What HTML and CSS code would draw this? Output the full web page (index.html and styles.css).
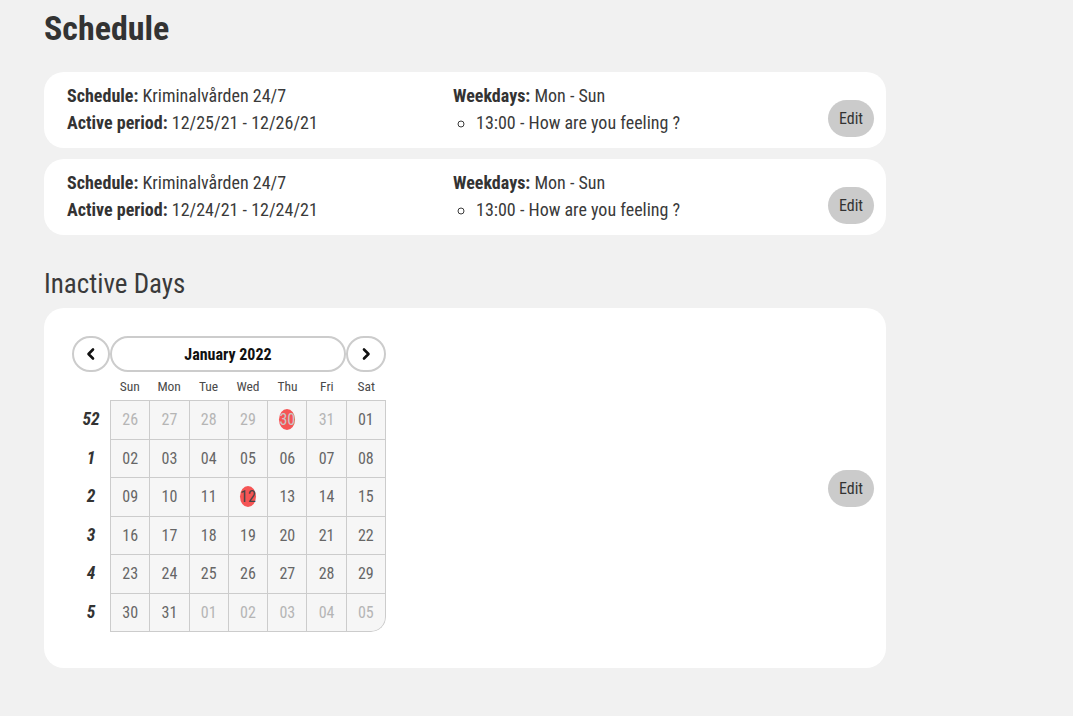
FILE: index.html
```html
<!DOCTYPE html>
<html lang="en">
<head>
<meta charset="utf-8">
<title>Schedule</title>
<link rel="stylesheet" href="styles.css">
</head>
<body>
<main class="page">
  <h1 class="title">Schedule</h1>

  <section class="card schedule-card">
    <div class="col">
      <div class="line"><b>Schedule:</b> Kriminalvården 24/7</div>
      <div class="line"><b>Active period:</b> 12/25/21 - 12/26/21</div>
    </div>
    <div class="col">
      <div class="line"><b>Weekdays:</b> Mon - Sun</div>
      <ul class="msgs"><li>13:00 - How are you feeling ?</li></ul>
    </div>
    <button class="edit edit-low">Edit</button>
  </section>

  <section class="card schedule-card">
    <div class="col">
      <div class="line"><b>Schedule:</b> Kriminalvården 24/7</div>
      <div class="line"><b>Active period:</b> 12/24/21 - 12/24/21</div>
    </div>
    <div class="col">
      <div class="line"><b>Weekdays:</b> Mon - Sun</div>
      <ul class="msgs"><li>13:00 - How are you feeling ?</li></ul>
    </div>
    <button class="edit edit-low">Edit</button>
  </section>

  <h2 class="subtitle">Inactive Days</h2>

  <section class="card days-card">
    <div class="cal">
      <div class="cal-nav">
        <button class="nav-btn" aria-label="Previous">
          <svg width="14" height="14" viewBox="0 0 14 14"><path d="M9 2.5 L4.5 7 L9 11.5" fill="none" stroke="#111" stroke-width="2.6" stroke-linecap="round" stroke-linejoin="round"/></svg>
        </button>
        <button class="month-btn">January 2022</button>
        <button class="nav-btn" aria-label="Next">
          <svg width="14" height="14" viewBox="0 0 14 14"><path d="M5 2.5 L9.5 7 L5 11.5" fill="none" stroke="#111" stroke-width="2.6" stroke-linecap="round" stroke-linejoin="round"/></svg>
        </button>
      </div>
      <div class="cal-body">
        <div class="wk-col">
          <div class="wk-head"></div>
          <div class="wk">52</div><div class="wk">1</div><div class="wk">2</div><div class="wk">3</div><div class="wk">4</div><div class="wk">5</div>
        </div>
        <div class="days-col">
          <div class="dow"><span>Sun</span><span>Mon</span><span>Tue</span><span>Wed</span><span>Thu</span><span>Fri</span><span>Sat</span></div>
          <div class="grid">
            <div class="d off">26</div><div class="d off">27</div><div class="d off">28</div><div class="d off">29</div><div class="d off"><span class="mark">30</span></div><div class="d off">31</div><div class="d">01</div>
            <div class="d">02</div><div class="d">03</div><div class="d">04</div><div class="d">05</div><div class="d">06</div><div class="d">07</div><div class="d">08</div>
            <div class="d">09</div><div class="d">10</div><div class="d">11</div><div class="d"><span class="mark dark">12</span></div><div class="d">13</div><div class="d">14</div><div class="d">15</div>
            <div class="d">16</div><div class="d">17</div><div class="d">18</div><div class="d">19</div><div class="d">20</div><div class="d">21</div><div class="d">22</div>
            <div class="d">23</div><div class="d">24</div><div class="d">25</div><div class="d">26</div><div class="d">27</div><div class="d">28</div><div class="d">29</div>
            <div class="d">30</div><div class="d">31</div><div class="d off">01</div><div class="d off">02</div><div class="d off">03</div><div class="d off">04</div><div class="d off last">05</div>
          </div>
        </div>
      </div>
    </div>
    <button class="edit">Edit</button>
  </section>
</main>
</body>
</html>
```

FILE: styles.css
```css
* { box-sizing: border-box; }

html, body {
  margin: 0;
  padding: 0;
  background: #f1f1f1;
}

body {
  font-family: "Roboto Condensed", Roboto, "Liberation Sans", sans-serif;
  font-stretch: condensed;
  color: #3a3a3a;
}

.page {
  width: 842px;
  margin-left: 44px;
  padding-top: 9px;
  padding-bottom: 48px;
}

.title {
  margin: 0 0 25px 0;
  font-size: 34px;
  line-height: 38px;
  font-weight: 700;
  color: #333;
}

.card {
  background: #fff;
  border-radius: 20px;
}

.schedule-card {
  display: grid;
  grid-template-columns: 386px 1fr auto;
  padding: 10px 12px 11px 23px;
  margin-bottom: 11px;
  min-height: 76px;
}

.line {
  font-size: 18px;
  line-height: 27px;
}

.line b { font-weight: 700; color: #333; }

.msgs {
  margin: 0;
  padding-left: 23px;
  list-style: circle;
  font-size: 18px;
  line-height: 27px;
}

.edit {
  width: 46px;
  height: 37px;
  border: none;
  border-radius: 19px;
  background: #cbcbcb;
  color: #333;
  font-family: inherit;
  font-stretch: condensed;
  font-size: 16px;
  padding: 0;
  align-self: center;
}

.edit-low { align-self: end; }

.subtitle {
  margin: 34px 0 9px 0;
  font-size: 27px;
  line-height: 30px;
  font-weight: 400;
  color: #3a3a3a;
}

.days-card {
  display: flex;
  justify-content: space-between;
  align-items: center;
  height: 360px;
  padding: 28px 12px 28px 28px;
}

.days-card .cal { align-self: flex-start; }

.cal-nav {
  display: flex;
  height: 36px;
}

.nav-btn {
  width: 38px;
  height: 36px;
  border: 2px solid #ccc;
  border-radius: 18px;
  background: #fff;
  padding: 0;
  display: flex;
  align-items: center;
  justify-content: center;
}

.nav-btn:last-child { width: 40px; }

.month-btn {
  width: 236px;
  height: 36px;
  border: 2px solid #ccc;
  border-radius: 18px;
  background: #fff;
  font-family: inherit;
  font-stretch: condensed;
  font-weight: 700;
  font-size: 16px;
  color: #111;
  padding: 0;
}

.cal-body {
  display: flex;
}

.wk-col {
  width: 38px;
  display: flex;
  flex-direction: column;
}

.wk-head { height: 28px; }

.wk {
  height: 38.5px;
  display: flex;
  align-items: center;
  justify-content: center;
  font-weight: 700;
  font-style: italic;
  font-size: 17.5px;
  color: #333;
}

.days-col { width: 276px; }

.dow {
  display: grid;
  grid-template-columns: repeat(7, 1fr);
  height: 28px;
  align-items: center;
  font-size: 13.5px;
  color: #4a4a4a;
  text-align: center;
}

.grid {
  display: grid;
  grid-template-columns: repeat(7, 1fr);
  grid-auto-rows: 38.5px;
  background: #f6f6f6;
  border-top: 1px solid #ccc;
  border-left: 1px solid #ccc;
  border-bottom-right-radius: 15px;
  overflow: hidden;
}

.d {
  display: flex;
  align-items: center;
  justify-content: center;
  border-right: 1px solid #ccc;
  border-bottom: 1px solid #ccc;
  font-size: 16px;
  color: #666;
}

.d.off { color: #b5b5b5; }

.d.last { border-bottom-right-radius: 15px; }

.mark {
  display: inline-flex;
  align-items: center;
  justify-content: center;
  width: 16px;
  height: 21px;
  border-radius: 50%;
  background: #f55555;
  color: #c8c8c8;
}

.mark.dark { color: #444; }
```
